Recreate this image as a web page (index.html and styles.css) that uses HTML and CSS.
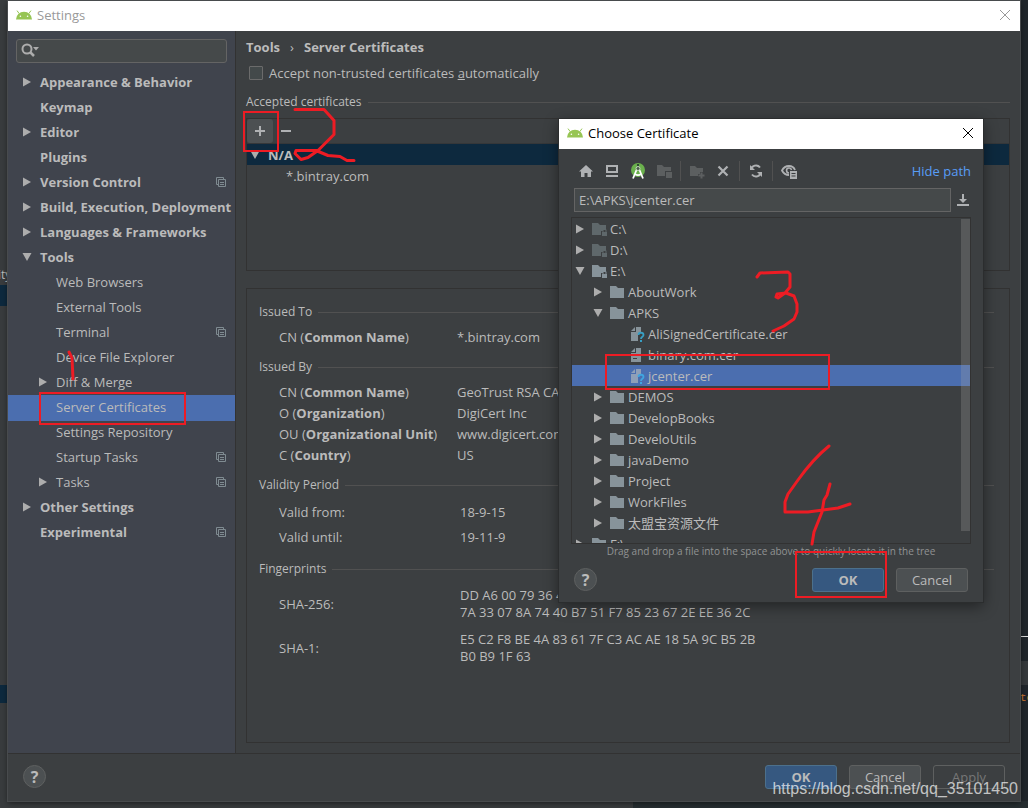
FILE: index.html
```html
<!DOCTYPE html>
<html lang="en">
<head>
<meta charset="utf-8">
<title>Settings</title>
<link rel="stylesheet" href="styles.css">
</head>
<body>
<svg class="defs" aria-hidden="true">
  <symbol id="android" viewBox="0 0 16 10"><path d="M0 9.4a8 7.6 0 0 1 16 0z" fill="#97c554"/><path d="M3.2 3.6 1 .6M12.800 3.600 15 .6" stroke="#97c554"/><circle cx="4.400" cy="6.200" r=".8" fill="#fff"/><circle cx="11.600" cy="6.200" r=".8" fill="#fff"/></symbol>
  <symbol id="right" viewBox="0 0 10 10"><path d="M1 0.500v9L9 5z" fill="#adadad"/></symbol>
  <symbol id="down" viewBox="0 0 10 10"><path d="M.5 1h9L5 9z" fill="#adadad"/></symbol>
  <symbol id="copy" viewBox="0 0 10 10"><path d="M2.500 7.500h-2v-7h7v2M2.500 2.500h7v7h-7zM4 5.500h4M4 7.500h4" fill="none" stroke="#7f8b91"/></symbol>
  <symbol id="folder" viewBox="0 0 16 14"><path d="M0 1h6l2 2h6v10H0z" fill="#87939a"/></symbol>
  <symbol id="disk" viewBox="0 0 16 14"><path d="M0 1h6l2 2h6v4h-3v2h-2v4H0z" fill="currentColor"/><path d="M10 10h5v4h-5z" fill="currentColor"/><path d="M11 10V7.500h3V10" fill="none" stroke="currentColor"/></symbol>
  <symbol id="close" viewBox="0 0 12 12"><path d="M1 1l10 10M11 1 1 11" fill="none" stroke="currentColor"/></symbol>
</svg>

<main class="window">
  <header class="titlebar"><svg class="android"><use href="#android"/></svg><h1>Settings</h1><button class="close" aria-label="Close"><svg><use href="#close"/></svg></button></header>
  <div class="body">
    <nav class="sidebar">
      <label class="search"><svg viewBox="0 0 20 16"><circle cx="6" cy="6" r="4.500" fill="none" stroke="#adadad" stroke-width="2"/><path d="M9 9l4 4" stroke="#adadad" stroke-width="2.500"/><path d="M12 4h6l-3 3.500z" fill="#adadad"/></svg><input type="text" aria-label="Search settings"></label>
      <ul class="menu">
        <li class="top"><svg class="arrow"><use href="#right"/></svg><span>Appearance &amp; Behavior</span></li>
        <li class="top"><i class="arrow"></i><span>Keymap</span></li>
        <li class="top"><svg class="arrow"><use href="#right"/></svg><span>Editor</span></li>
        <li class="top"><i class="arrow"></i><span>Plugins</span></li>
        <li class="top"><svg class="arrow"><use href="#right"/></svg><span>Version Control</span><svg class="copy"><use href="#copy"/></svg></li>
        <li class="top"><svg class="arrow"><use href="#right"/></svg><span>Build, Execution, Deployment</span></li>
        <li class="top"><svg class="arrow"><use href="#right"/></svg><span>Languages &amp; Frameworks</span></li>
        <li class="top"><svg class="arrow"><use href="#down"/></svg><span>Tools</span></li>
        <li class="sub"><i class="arrow"></i><span>Web Browsers</span></li>
        <li class="sub"><i class="arrow"></i><span>External Tools</span></li>
        <li class="sub"><i class="arrow"></i><span>Terminal</span><svg class="copy"><use href="#copy"/></svg></li>
        <li class="sub"><i class="arrow"></i><span>Device File Explorer</span></li>
        <li class="sub"><svg class="arrow"><use href="#right"/></svg><span>Diff &amp; Merge</span></li>
        <li class="sub selected"><i class="arrow"></i><span>Server Certificates</span></li>
        <li class="sub"><i class="arrow"></i><span>Settings Repository</span></li>
        <li class="sub"><i class="arrow"></i><span>Startup Tasks</span><svg class="copy"><use href="#copy"/></svg></li>
        <li class="sub"><svg class="arrow"><use href="#right"/></svg><span>Tasks</span><svg class="copy"><use href="#copy"/></svg></li>
        <li class="top"><svg class="arrow"><use href="#right"/></svg><span>Other Settings</span></li>
        <li class="top"><i class="arrow"></i><span>Experimental</span><svg class="copy"><use href="#copy"/></svg></li>
      </ul>
    </nav>
    <section class="content">
      <h2 class="crumbs"><span>Tools</span><span class="sep">›</span><span>Server Certificates</span></h2>
      <label class="check"><input type="checkbox"><span>Accept non-trusted certificates <u>a</u>utomatically</span></label>
      <h3 class="rule">Accepted certificates</h3>
      <div class="certs">
        <div class="tools">
          <button class="add" aria-label="Add"><svg viewBox="0 0 12 12"><path d="M6 1v10M1 6h10" stroke="#afb1b3" stroke-width="2"/></svg></button>
          <button aria-label="Remove"><svg viewBox="0 0 12 12"><path d="M1 6h10" stroke="#afb1b3" stroke-width="2"/></svg></button>
        </div>
        <ul>
          <li class="group"><svg class="arrow"><use href="#down"/></svg><b>N/A</b></li>
          <li class="leaf">*.bintray.com</li>
        </ul>
      </div>
      <div class="details">
        <h3 class="rule">Issued To</h3>
        <dl><dt>CN (<b>Common Name</b>)</dt><dd>*.bintray.com</dd></dl>
        <h3 class="rule">Issued By</h3>
        <dl>
          <dt>CN (<b>Common Name</b>)</dt><dd>GeoTrust RSA CA</dd>
          <dt>O (<b>Organization</b>)</dt><dd>DigiCert Inc</dd>
          <dt>OU (<b>Organizational Unit</b>)</dt><dd>www.digicert.com</dd>
          <dt>C (<b>Country</b>)</dt><dd>US</dd>
        </dl>
        <h3 class="rule">Validity Period</h3>
        <dl class="wide dates"><dt>Valid from:</dt><dd>18-9-15</dd><dt>Valid until:</dt><dd>19-11-9</dd></dl>
        <h3 class="rule">Fingerprints</h3>
        <dl class="wide prints">
          <dt>SHA-256:</dt><dd>DD A6 00 79 36 4<br>7A 33 07 8A 74 40 B7 51 F7 85 23 67 2E EE 36 2C</dd>
          <dt>SHA-1:</dt><dd>E5 C2 F8 BE 4A 83 61 7F C3 AC AE 18 5A 9C B5 2B<br>B0 B9 1F 63</dd>
        </dl>
      </div>
    </section>
  </div>
  <footer class="footer">
    <button class="help" aria-label="Help">?</button>
    <button class="btn primary">OK</button><button class="btn">Cancel</button><button class="btn" disabled>Apply</button>
  </footer>
</main>

<section class="dialog" role="dialog" aria-labelledby="dialog-title">
  <header class="titlebar"><svg class="android"><use href="#android"/></svg><h1 id="dialog-title">Choose Certificate</h1><button class="close" aria-label="Close"><svg><use href="#close"/></svg></button></header>
  <div class="toolbar">
    <button aria-label="Home"><svg viewBox="0 0 16 16"><path d="M8 2l7 6.500h-2V14H9.500v-4h-3v4H3V8.500H1z" fill="#afb1b3"/></svg></button>
    <button aria-label="Desktop"><svg viewBox="0 0 16 16"><path d="M2 2h12v8H2zM4 4v4h8V4zM2 12h12v2H2z" fill="#afb1b3" fill-rule="evenodd"/></svg></button>
    <button aria-label="Project"><svg viewBox="0 0 16 16"><circle cx="8" cy="7" r="7" fill="#6ab04c"/><path d="M8 1v3" stroke="#2f4a33" stroke-width="2"/><path d="M6.500 7 3 15.500M9.500 7l3.500 8.500M5 11c2 1.500 4 1.500 6 0" stroke="#fff" stroke-width="1.800" fill="none"/><circle cx="8" cy="5.500" r="2" fill="#4a5a4a" stroke="#c4d8bd"/></svg></button>
    <button aria-label="Module" disabled><svg viewBox="0 0 16 16"><path d="M1 2h5l2 2h7v4H9v5H1z" fill="#5c5f60"/><path d="M10 9h6v6h-6z" fill="#5c5f60"/></svg></button>
    <hr>
    <button aria-label="New folder" disabled><svg viewBox="0 0 16 16"><path d="M1 3h5l2 2h6v4h-3v2H9v2H1z" fill="#5c5f60"/><path d="M12.500 9.500v6M9.500 12.500h6" stroke="#5c5f60" stroke-width="2"/></svg></button>
    <button aria-label="Delete"><svg viewBox="0 0 16 16"><path d="M3.500 3.500l9 9M12.500 3.500l-9 9" stroke="#afb1b3" stroke-width="2.200"/></svg></button>
    <hr>
    <button aria-label="Refresh"><svg viewBox="0 0 16 16"><path d="M3 7a5 5 0 0 1 9-2.500M13 9a5 5 0 0 1-9 2.500" fill="none" stroke="#afb1b3" stroke-width="2"/><path d="M2 2v5h5zM14 14V9H9z" fill="#afb1b3"/></svg></button>
    <hr>
    <button aria-label="Show hidden files"><svg viewBox="0 0 16 16"><path d="M8 12C4 12 2 9.500 1 7.500 2.500 4.500 5 3 8 3s5 1.500 6 4" fill="none" stroke="#afb1b3" stroke-width="1.800"/><path d="M8 10a2.500 2.500 0 1 1 2.500-3" fill="none" stroke="#afb1b3" stroke-width="1.600"/><path d="M9 8h7v8H9zM10.500 10v1h4v-1zM10.500 12.500v1h4v-1z" fill="#afb1b3" fill-rule="evenodd"/></svg></button>
    <a href="#">Hide path</a>
  </div>
  <div class="path"><input type="text" value="E:\APKS\jcenter.cer" aria-label="Path"><button aria-label="History"><svg viewBox="0 0 12 12"><path d="M5 0h2v5h3L6 9 2 5h3zM0 10h12v2H0z" fill="#afb1b3"/></svg></button></div>
  <div class="tree">
    <ul>
      <li class="l0 dim"><svg class="arrow"><use href="#right"/></svg><svg class="icon"><use href="#disk"/></svg>C:\</li>
      <li class="l0 dim"><svg class="arrow"><use href="#right"/></svg><svg class="icon"><use href="#disk"/></svg>D:\</li>
      <li class="l0"><svg class="arrow"><use href="#down"/></svg><svg class="icon"><use href="#disk"/></svg>E:\</li>
      <li class="l1"><svg class="arrow"><use href="#right"/></svg><svg class="icon"><use href="#folder"/></svg>AboutWork</li>
      <li class="l1"><svg class="arrow"><use href="#down"/></svg><svg class="icon"><use href="#folder"/></svg>APKS</li>
      <li class="l2"><svg class="icon" viewBox="0 0 16 16"><path d="M6 1h5v6H8v8H1V6h5zM1 5l4-4v4z" fill="#87939a"/><path d="M8.500 9c0-3 5-3 5 0 0 2-2.500 1.500-2.500 4" fill="none" stroke="#389fc4" stroke-width="1.800"/><path d="M10 14h2v2h-2z" fill="#389fc4"/></svg>AliSignedCertificate.cer</li>
      <li class="l2"><svg class="icon" viewBox="0 0 16 16"><path d="M6 1h5v14H1V6h5zM1 5l4-4v4zM3 8v1h6V8zM3 11v1h4v-1z" fill="#87939a" fill-rule="evenodd"/></svg>binary.com.cer</li>
      <li class="l2 selected"><svg class="icon" viewBox="0 0 16 16"><path d="M6 1h5v6H8v8H1V6h5zM1 5l4-4v4z" fill="#8f9fb8"/><path d="M8.500 9c0-3 5-3 5 0 0 2-2.500 1.500-2.500 4" fill="none" stroke="#40a6e0" stroke-width="1.800"/><path d="M10 14h2v2h-2z" fill="#40a6e0"/></svg>jcenter.cer</li>
      <li class="l1"><svg class="arrow"><use href="#right"/></svg><svg class="icon"><use href="#folder"/></svg>DEMOS</li>
      <li class="l1"><svg class="arrow"><use href="#right"/></svg><svg class="icon"><use href="#folder"/></svg>DevelopBooks</li>
      <li class="l1"><svg class="arrow"><use href="#right"/></svg><svg class="icon"><use href="#folder"/></svg>DeveloUtils</li>
      <li class="l1"><svg class="arrow"><use href="#right"/></svg><svg class="icon"><use href="#folder"/></svg>javaDemo</li>
      <li class="l1"><svg class="arrow"><use href="#right"/></svg><svg class="icon"><use href="#folder"/></svg>Project</li>
      <li class="l1"><svg class="arrow"><use href="#right"/></svg><svg class="icon"><use href="#folder"/></svg>WorkFiles</li>
      <li class="l1"><svg class="arrow"><use href="#right"/></svg><svg class="icon"><use href="#folder"/></svg>太盟宝资源文件</li>
      <li class="l0"><svg class="arrow"><use href="#right"/></svg><svg class="icon"><use href="#disk"/></svg>F:\</li>
    </ul>
    <div class="scroll"></div>
  </div>
  <p class="hint">Drag and drop a file into the space above to quickly locate it in the tree</p>
  <div class="actions"><button class="help" aria-label="Help">?</button><button class="btn primary">OK</button><button class="btn">Cancel</button></div>
</section>

<div class="backdrop" aria-hidden="true">
  <i class="side"></i><span class="tab">ity</span><i class="mark one"></i><i class="mark two"></i><i class="line"></i><i class="band"></i><i class="base"></i><span class="code">te</span>
</div>

<svg class="ink" viewBox="0 0 1028 808" aria-hidden="true">
  <g fill="none" stroke="#ed1c24" stroke-width="2"><path d="M40 393h145v31H40zM244 112h34v39h-34zM606 355h223v34H606zM796 552h90v45h-90z"/></g>
  <g fill="none" stroke="#ed1c24" stroke-width="3" stroke-linecap="round" stroke-linejoin="round">
    <path d="M69 352l3 6 1 21"/>
    <path d="M295 109.500h29l10 11v14l-16 16-10 7-7 2-6-6 1-3h20l12 5 12 1 7 4h7"/>
    <path d="M757 277l3-4 28-1 2 2v13l-5 6-7 5-2-1 1-3 9-1 8 3 3 8v8l-3 7-10 7-11 5"/>
    <path d="M829 446q-16 13-31 34l-10 14-3 8v10h23l30-4 12-4M830 484l-3 11-3 5-2 12-8 20-2 12"/>
  </g>
</svg>
<p class="watermark">https://blog.csdn.net/qq_35101450</p>
</body>
</html>
```
FILE: styles.css
```css
* { box-sizing: border-box; }
body {
  margin: 0;
  padding: 1px 8px 7px;
  height: 100vh;
  overflow: hidden;
  position: relative;
  background: #393c3e;
  color: #bbbbbb;
  font: 13px/20px "Open Sans", "Noto Sans CJK SC", sans-serif;
}
ul, dl, dd, p, h1, h2, h3 { margin: 0; padding: 0; font-size: 13px; font-weight: 400; list-style: none; }
button, input { font: inherit; color: inherit; }
button { display: grid; place-items: center; padding: 0; border: 0; background: none; }
svg { display: block; flex: none; }
.defs { position: absolute; width: 0; height: 0; }
.arrow { width: 10px; height: 10px; flex: none; }

.window { position: relative; z-index: 1; display: flex; flex-direction: column; height: 100%; background: #3c3f41; box-shadow: 0 0 0 1px #484b4d, 0 2px 6px #0008; }
.titlebar { display: flex; align-items: center; gap: 5px; height: 30px; flex: none; padding: 0 9px 2px 8px; background: #fff; color: #000; }
.window .titlebar { color: #999; }
.titlebar .close { margin-left: auto; }
.close svg { width: 12px; height: 12px; }
.android { width: 16px; height: 10px; }
.body { flex: 1; display: flex; min-height: 0; }

.sidebar { width: 228px; flex: none; background: #40444d; border-right: 1px solid #323232; padding-top: 8px; }
.search { display: flex; align-items: center; height: 24px; margin: 0 8px 7px; padding: 0 4px; border: 1px solid #646464; border-radius: 3px; background: #45494a; }
.search svg { width: 20px; height: 16px; }
.search input { flex: 1; min-width: 0; border: 0; background: none; outline: 0; }
.menu li { display: flex; align-items: center; height: 25px; padding: 0 9px 1px 14px; gap: 8px; white-space: nowrap; }
.menu .sub { padding-left: 30px; }
.menu .top { font-weight: 700; }
.menu .selected, .tree .selected { background: #4b6eaf; }
.menu .selected { box-shadow: 0 1px #4b6eaf; }
.copy { width: 10px; height: 10px; margin-left: auto; }

.content { flex: 1; min-width: 0; display: flex; flex-direction: column; padding: 6px 10px 10px; }
.crumbs { display: flex; gap: 10px; font-weight: 700; }
.sep { font-weight: 400; }
.check { display: flex; align-items: center; gap: 6px; height: 20px; margin: 6px 0 9px 3px; }
.check input { appearance: none; width: 14px; height: 14px; margin: 0; border: 1px solid #6b6b6b; border-radius: 1px; background: #43494a; }
.rule { display: flex; align-items: center; gap: 6px; font-size: 12px; line-height: 20px; }
.rule::after { content: ""; flex: 1; height: 1px; background: #515151; }
.certs { height: 153px; flex: none; margin: 6px 0 17px; border: 1px solid #323232; }
.tools { display: flex; height: 25px; border-bottom: 1px solid #353739; }
.tools button { width: 26px; height: 24px; }
.tools svg { width: 12px; height: 12px; }
.tools .add { background: #4c5052; border-radius: 3px; }
.certs li { display: flex; align-items: center; height: 21px; }
.certs .group { gap: 8px; padding-left: 3px; background: #0d293e; }
.certs .leaf { padding-left: 39px; }
.details { flex: 1; min-height: 0; border: 1px solid #323232; padding: 13px 15px 0 12px; }
.details dl { display: grid; grid-template-columns: 178px 1fr; grid-auto-rows: 21px; align-items: center; padding: 4px 0 10px 20px; }
.details .wide { grid-template-columns: 181px 1fr; }
.details .dates { grid-auto-rows: 25px; padding: 4px 0 10px 20px; }
.details .prints { grid-auto-rows: 34px; row-gap: 10px; padding-top: 8px; line-height: 17px; }

.footer { display: flex; gap: 12px; height: 48px; flex: none; padding: 11px 15px; border-top: 1px solid #323232; }
.help { width: 23px; height: 23px; margin-right: auto; border: 1px solid #5e6060; border-radius: 50%; background: #4c5052; font-size: 16px; font-weight: 700; line-height: 20px; }
.btn { width: 72px; height: 24px; border: 1px solid #5e6060; border-radius: 3px; background: #4c5052; line-height: 20px; }
.btn.primary { border-color: #4c708c; background: #365880; font-weight: 700; }
.btn:disabled { background: none; color: #777; }

.dialog { position: absolute; z-index: 2; left: 559px; top: 119px; width: 424px; background: #3c3f41; box-shadow: 0 0 0 1px #2b2d2e, 0 4px 14px #0007; }
.toolbar { display: flex; align-items: center; gap: 10px; height: 32px; margin: 6px 12px 0 19px; }
.toolbar svg { width: 16px; height: 16px; }
.toolbar hr { width: 1px; height: 20px; margin: 0 -2px; border: 0; background: #515151; }
.toolbar a { margin-left: auto; color: #589df6; text-decoration: none; }
.path { display: flex; gap: 6px; margin: 1px 14px 5px 15px; }
.path input { flex: 1; min-width: 0; height: 24px; padding: 0 4px; border: 1px solid #646464; background: #45494a; }
.path svg { width: 12px; height: 12px; }
.tree { position: relative; height: 327px; margin: 0 12px; border: 1px solid #323232; overflow: hidden; }
.tree li { display: flex; align-items: center; height: 21px; gap: 2px; white-space: nowrap; }
.tree .icon { width: 16px; height: 14px; color: #87939a; }
.tree .arrow { margin-right: 5px; }
.tree .l0 { padding-left: 3px; }
.tree .l1 { padding-left: 21px; }
.tree .l2 { padding-left: 58px; }
.tree .l2 .icon { height: 16px; }
.tree .dim .icon { color: #5f686b; }
.scroll { position: absolute; right: 0; top: 1px; width: 9px; height: 312px; background: #a6a6a640; }
.hint { height: 14px; text-align: center; font-size: 10px; line-height: 14px; color: #919393; }
.actions { display: flex; gap: 12px; padding: 10px 15px; }

.backdrop { position: absolute; inset: 0; background: #393c3e; }
.backdrop > * { position: absolute; }
.side { right: 0; top: 0; bottom: 0; width: 8px; background: #20262b; }
.tab { left: -2px; top: 265px; font-size: 12px; }
.mark { left: 0; width: 8px; background: #0d293e; }
.one { top: 285px; height: 21px; }
.two { top: 685px; height: 18px; }
.line { right: 0; top: 636px; width: 8px; height: 1px; background: #ddd; }
.band { right: 0; top: 661px; width: 8px; height: 24px; background: #35393b; }
.base { left: 633px; right: 0; bottom: 0; height: 7px; background: #262e31; }
.code { left: 1020px; top: 689px; color: #cc7832; font: 11px/18px "Liberation Mono", monospace; }

.ink { position: absolute; z-index: 3; left: 0; top: 0; width: 1028px; height: 808px; pointer-events: none; }
.watermark { position: absolute; z-index: 4; right: 10px; bottom: 9px; color: #ffffffb3; font: 16px/20px "Liberation Sans", sans-serif; }
```
